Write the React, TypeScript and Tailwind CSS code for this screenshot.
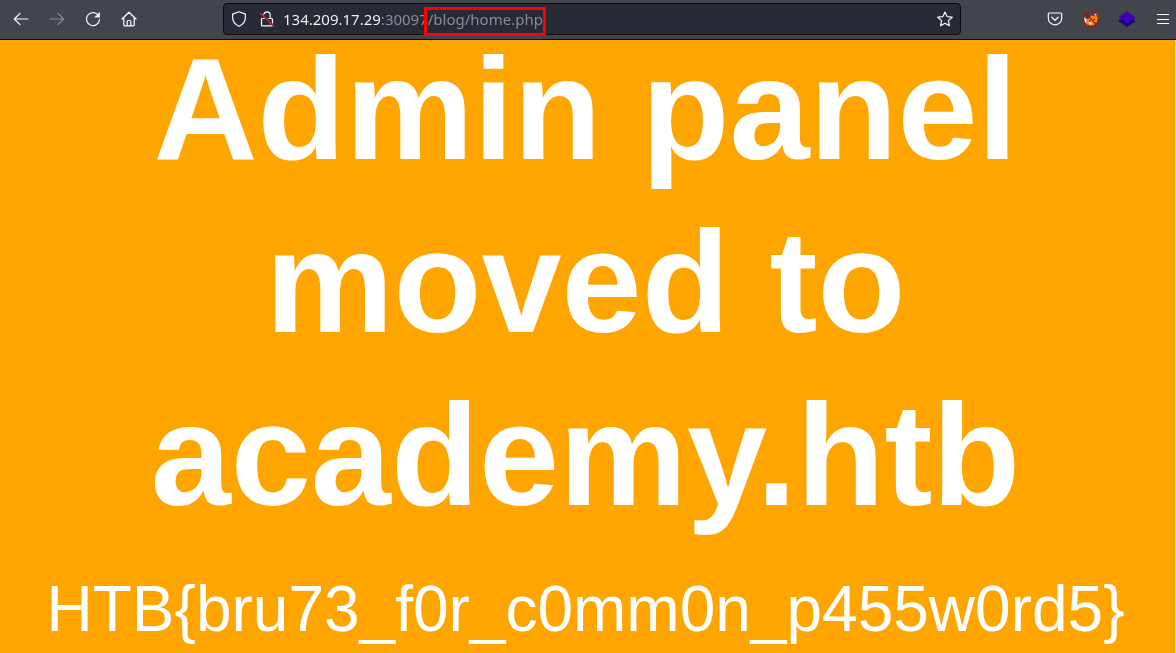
import { useState } from "react";

const iconButton = "flex h-8 w-9 items-center justify-center text-[#fbfbfe] disabled:text-[#8a8b90]";

function ToolbarButton({ label, disabled, children }: { label: string; disabled?: boolean; children: React.ReactNode }) {
  return (
    <button type="button" aria-label={label} disabled={disabled} className={iconButton}>
      <svg width="16" height="16" viewBox="0 0 16 16" fill="none" stroke="currentColor" strokeWidth="1.2" strokeLinecap="round" strokeLinejoin="round" aria-hidden="true">
        {children}
      </svg>
    </button>
  );
}

function Shield() {
  return (
    <svg width="16" height="16" viewBox="0 0 16 16" fill="none" stroke="#fbfbfe" strokeWidth="1.2" strokeLinejoin="round" aria-hidden="true">
      <path d="M8 .8 14.4 3.1v3.2c0 3.8-2.4 7.2-6.4 9-4-1.8-6.4-5.2-6.4-9V3.1Z" />
    </svg>
  );
}

function InsecureLock() {
  return (
    <svg width="16" height="16" viewBox="0 0 16 16" fill="none" strokeWidth="1.2" strokeLinecap="round" aria-hidden="true">
      <path d="M4.8 3.4C5.2 1.8 6.4.8 8 .8c1.9 0 3.2 1.4 3.2 3.2v3.2M5.700 7.500H3.500c-.6 0-1 .4-1 1v5.400c0 .6.4 1 1 1h9.300M9.500 7.500h3c.6 0 1 .4 1 1v3.500" stroke="#fbfbfe" />
      <path d="m1.500 2.500 13 12.500" stroke="#e2193f" strokeWidth="1.6" />
    </svg>
  );
}

function FoxProxy() {
  return (
    <svg width="16" height="16" viewBox="0 0 16 16" aria-hidden="true">
      <path d="M1 6c1 .5 2.500 1.500 3 3L6 12l-2 2C1.500 12.500.5 9 1 6ZM11 2l3.500 1 1 5-3-2Z" fill="#e8e4e0" />
      <path d="m3.500 8.500 3-1.500L8 4.500l3 .5 2.500-2L15 8l-1.500 4-3 2.500-4.500.5-3-2Z" fill="#e98516" />
      <path d="m5 12 2-1.500 2 1.500-1.500 2Z" fill="#f4dfc0" />
      <path d="M6 10h1.500M10.500 8.500H12" stroke="#3d2611" />
      <circle cx="8" cy="8" r="7.4" fill="none" stroke="#bd0a0a" strokeWidth="1.1" />
      <path d="m3 3 10 10" stroke="#bd0a0a" strokeWidth="1.1" />
    </svg>
  );
}

function Layers() {
  return (
    <svg width="16" height="16" viewBox="0 0 16 16" aria-hidden="true">
      <path d="m0 9 3-1 5 4 5-4 3 1v1.500L8 16 0 10.500Z" fill="#1d007a" />
      <path d="m8 0 8 6v1l-8 5-8-5V6Z" fill="#4100b2" />
    </svg>
  );
}

export default function App() {
  const [url, setUrl] = useState("134.209.17.29:30097/blog/home.php");
  return (
    <div className="flex min-h-screen flex-col bg-[#ffa500] font-['Liberation_Sans',sans-serif] text-white">
      <header className="flex h-10 items-center border-b border-[#0c0c0d] bg-[#42454c] pb-px pl-[3px]">
        <nav aria-label="Navigation" className="flex">
          <ToolbarButton label="Back"><path d="M15 8H1.500M7 2.300 1.300 8 7 13.700" /></ToolbarButton>
          <ToolbarButton label="Forward" disabled><path d="M1 8h13.500M9 2.300 14.700 8 9 13.700" /></ToolbarButton>
          <ToolbarButton label="Reload">
            <path d="M13.200 4.200A6.500 6.500 0 1 0 14.500 8.500" />
            <path d="M14.600 1.500v4.700H9.900Z" fill="currentColor" strokeWidth="0.500" />
          </ToolbarButton>
          <ToolbarButton label="Home">
            <path d="M1 8 8 1.200 15 8M2.800 6.500v7.300c0 .6.400 1 1 1h8.400c.6 0 1-.4 1-1V6.500M6.200 14.500v-4c0-.6.400-1 1-1h1.600c.6 0 1 .4 1 1v4" />
          </ToolbarButton>
        </nav>
        <div className="relative mx-[76px] flex h-8 flex-1 items-center rounded border border-[#0c0c0d] bg-[#282a36] px-[7px]">
          <button type="button" aria-label="Tracking protection"><Shield /></button>
          <button type="button" aria-label="Connection not secure" className="ml-3"><InsecureLock /></button>
          <input
            type="text"
            aria-label="Address"
            spellCheck={false}
            value={url}
            onChange={(event) => setUrl(event.target.value)}
            className="ml-2 h-6 min-w-0 flex-1 bg-[linear-gradient(90deg,#fbfbfe_98px,#8d8e95_98px)] bg-clip-text font-['Noto_Sans',sans-serif] text-[15px] text-transparent caret-white outline-none"
          />
          <button type="button" aria-label="Bookmark this page">
            <svg width="16" height="16" viewBox="0 0 16 16" fill="none" stroke="#fbfbfe" strokeWidth="1.2" strokeLinejoin="round" aria-hidden="true">
              <path d="m8 1 2.100 4.600 5.100.6-3.800 3.400 1 5.200L8 12.300l-4.400 2.500 1-5.200L.8 6.200l5.100-.6Z" />
            </svg>
          </button>
          <div className="pointer-events-none absolute left-[200px] top-[3px] h-[29px] w-[122px] border-3 border-[#ff0000]" />
        </div>
        <div className="-mr-[5px] flex">
          <ToolbarButton label="Save to Pocket">
            <path d="M2.500 2h11c.7 0 1.200.5 1.200 1.200v4a6.700 6.700 0 0 1-13.400 0v-4C1.300 2.500 1.800 2 2.500 2ZM4.800 6.200 8 9.300l3.200-3.100" />
          </ToolbarButton>
          <button type="button" aria-label="FoxProxy" className={iconButton}><FoxProxy /></button>
          <button type="button" aria-label="Wappalyzer" className={iconButton}><Layers /></button>
          <button type="button" aria-label="Application menu" className={iconButton}>
            <svg width="12" height="16" viewBox="0 0 12 16" stroke="currentColor" strokeWidth="1.2" aria-hidden="true">
              <path d="M0 3.500h12M0 8.500h12M0 12.500h12" />
            </svg>
          </button>
        </div>
      </header>
      <main className="flex flex-1 flex-col items-center border-r border-[#d8d2c8] pr-11 pl-10 text-center">
        <h1 className="-mt-[17px] max-w-[1000px] text-[144px] leading-[173px] font-bold">Admin panel moved to academy.htb</h1>
        <p className="mt-[30px] text-[64px] leading-[74px]">{"HTB{bru73_f0r_c0mm0n_p455w0rd5}"}</p>
      </main>
    </div>
  );
}
